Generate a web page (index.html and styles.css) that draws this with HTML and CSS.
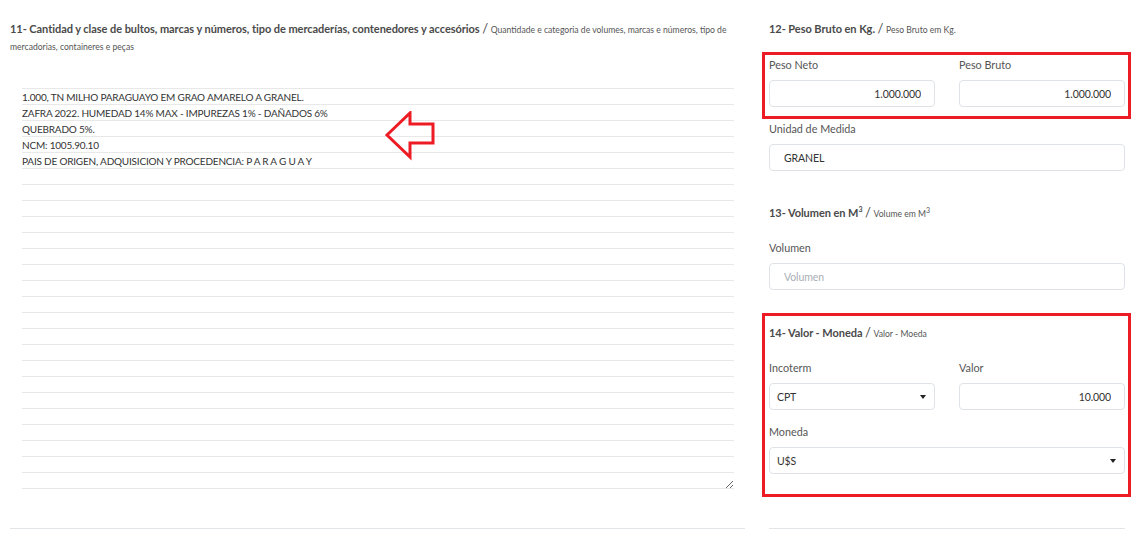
FILE: index.html
```html
<!DOCTYPE html>
<html lang="es">
<head>
    <meta charset="UTF-8">
    <meta name="viewport" content="width=device-width, initial-scale=1.0">
    <title>Carga y valores</title>
    <link rel="stylesheet" href="styles.css">
</head>
<body>
    <div class="page">
        <div class="col-left">
            <h4 class="section-title">11- Cantidad y clase de bultos, marcas y números, tipo de mercaderías, contenedores y accesórios <span class="sep">/</span> <small>Quantidade e categoria de volumes, marcas e números, tipo de mercadorias, containeres e peças</small></h4>
            <textarea class="cargo-desc" spellcheck="false">1.000, TN MILHO PARAGUAYO EM GRAO AMARELO A GRANEL.
ZAFRA 2022. HUMEDAD 14% MAX - IMPUREZAS 1% - DAÑADOS 6%
QUEBRADO 5%.
NCM: 1005.90.10
PAIS DE ORIGEN, ADQUISICION Y PROCEDENCIA: P A R A G U A Y</textarea>
            <svg class="pointer-arrow" width="52" height="50" viewBox="0 0 52 50">
                <polygon points="3,24 26,2 26,13 49,13 49,32 26,32 26,46" fill="none" stroke="#ed1c24" stroke-width="3" stroke-linejoin="miter"/>
            </svg>
            <hr class="divider">
        </div>

        <div class="col-right">
            <h4 class="section-title">12- Peso Bruto en Kg. <span class="sep">/</span> <small>Peso Bruto em Kg.</small></h4>
            <div class="highlight box-peso">
                <div class="row">
                    <div class="field">
                        <label for="peso-neto">Peso Neto</label>
                        <input type="text" id="peso-neto" class="form-control text-right" value="1.000.000">
                    </div>
                    <div class="field">
                        <label for="peso-bruto">Peso Bruto</label>
                        <input type="text" id="peso-bruto" class="form-control text-right" value="1.000.000">
                    </div>
                </div>
            </div>
            <div class="field">
                <label for="unidad">Unidad de Medida</label>
                <input type="text" id="unidad" class="form-control" value="GRANEL">
            </div>

            <h4 class="section-title title-volumen">13- Volumen en M<sup>3</sup> <span class="sep">/</span> <small>Volume em M<sup>3</sup></small></h4>
            <div class="field">
                <label for="volumen">Volumen</label>
                <input type="text" id="volumen" class="form-control" placeholder="Volumen">
            </div>

            <div class="highlight box-valor">
                <h4 class="section-title">14- Valor - Moneda <span class="sep">/</span> <small>Valor - Moeda</small></h4>
                <div class="row">
                    <div class="field">
                        <label for="incoterm">Incoterm</label>
                        <div class="select-wrap">
                            <select id="incoterm" class="form-control">
                                <option>CPT</option>
                            </select>
                        </div>
                    </div>
                    <div class="field">
                        <label for="valor">Valor</label>
                        <input type="text" id="valor" class="form-control text-right" value="10.000">
                    </div>
                </div>
                <div class="field field-moneda">
                    <label for="moneda">Moneda</label>
                    <div class="select-wrap">
                        <select id="moneda" class="form-control">
                            <option>U$S</option>
                        </select>
                    </div>
                </div>
            </div>
            <hr class="divider">
        </div>
    </div>
</body>
</html>
```

FILE: styles.css
```css
body {
    margin: 0;
    font-family: Lato, "Open Sans", sans-serif;
    background-color: #fff;
    color: #444;
}
.page {
    display: flex;
    gap: 24px;
    padding: 20px 12px 0 10px;
}
.col-left {
    position: relative;
    width: 735px;
    flex: none;
}
.col-right {
    width: 356px;
    flex: none;
}
.section-title {
    margin: 0;
    font-size: 11px;
    letter-spacing: -0.05px;
    line-height: 17px;
    font-weight: 700;
    color: #4a4a4a;
}
.section-title .sep {
    font-weight: 400;
    font-size: 13px;
    line-height: 0;
}
.section-title small {
    font-size: 8.6px;
    letter-spacing: 0;
    font-weight: 400;
    line-height: 0;
    color: #555;
}
.section-title sup {
    font-size: 7px;
    line-height: 0;
}
.cargo-desc {
    display: block;
    box-sizing: content-box;
    width: 712px;
    height: 400px;
    margin: 34px 0 0 12px;
    padding: 0;
    border: none;
    border-top: 1px solid #e8e8e8;
    outline: none;
    font-family: Lato, sans-serif;
    font-size: 10px;
    letter-spacing: -0.2px;
    line-height: 16px;
    color: #333;
    background: repeating-linear-gradient(to bottom, transparent 0, transparent 15px, #e8e8e8 15px, #e8e8e8 16px);
    overflow: hidden;
}
.pointer-arrow {
    position: absolute;
    left: 374px;
    top: 91px;
}
.divider {
    margin: 39px 0 0;
    border: none;
    border-top: 1px solid #e3e6e8;
}
.col-right .divider {
    margin-top: 31px;
}
.highlight {
    margin: 0 -6px 0 -7px;
    border: 3px solid #ed1c24;
    padding: 0 3px 0 4px;
}
.box-peso {
    margin-top: 15px;
    padding-top: 0;
    padding-bottom: 9px;
}
.box-valor {
    margin-top: 23px;
    padding-top: 8px;
    padding-bottom: 20px;
}
.row {
    display: flex;
    gap: 24px;
}
.row .field {
    width: 166px;
}
.box-valor .row {
    margin-top: 17px;
}
.field-moneda {
    margin-top: 12px;
}
.field label {
    display: block;
    font-size: 10.8px;
    line-height: 20px;
    margin-bottom: 5px;
    color: #555;
}
.title-volumen {
    margin-top: 33px;
    margin-bottom: 17px;
}
.form-control {
    display: block;
    box-sizing: border-box;
    width: 100%;
    height: 27px;
    padding: 0 13px 0 14px;
    border: 1px solid #dfe3e7;
    border-radius: 4px;
    background: #fff;
    font-family: Lato, sans-serif;
    font-size: 10.5px;
    letter-spacing: -0.1px;
    color: #333;
    outline: none;
}
.form-control::placeholder {
    color: #a9aeb4;
}
.text-right {
    text-align: right;
}
.select-wrap {
    position: relative;
}
.select-wrap select {
    appearance: none;
    -webkit-appearance: none;
    padding-left: 7px;
}
.select-wrap::after {
    content: "";
    position: absolute;
    right: 9px;
    top: 12px;
    border-left: 3.5px solid transparent;
    border-right: 3.5px solid transparent;
    border-top: 4px solid #222;
}
```
